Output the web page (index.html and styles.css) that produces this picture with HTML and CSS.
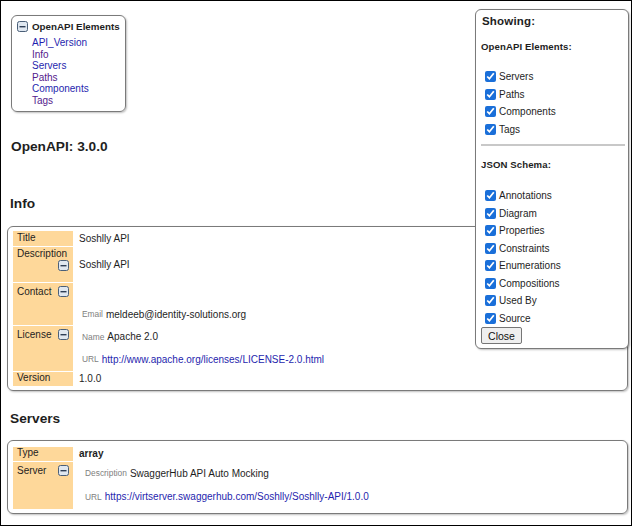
FILE: index.html
```html
<!DOCTYPE html>
<html>
<head>
<meta charset="utf-8">
<link rel="stylesheet" href="styles.css">
</head>
<body>
<div class="frame">
  <div class="nav">
    <div class="nav-head"><svg class="tog" viewBox="0 0 11 11"><rect x="0.5" y="0.5" width="10" height="10" rx="2" fill="#dfe7f0" stroke="#4a5f78"/><rect x="2.5" y="5" width="6" height="1.4" fill="#2d3e55"/></svg><span>OpenAPI Elements</span></div>
    <ul class="nav-list">
      <li><a class="lnk">API_Version</a></li>
      <li><a class="lnk visited">Info</a></li>
      <li><a class="lnk">Servers</a></li>
      <li><a class="lnk visited">Paths</a></li>
      <li><a class="lnk">Components</a></li>
      <li><a class="lnk visited">Tags</a></li>
    </ul>
  </div>

  <h2 class="version">OpenAPI: 3.0.0</h2>

  <h2 class="section info-h">Info</h2>
  <div class="box">
    <table class="props">
      <tr class="r-title"><td class="lab">Title</td><td class="val">Soshlly API</td></tr>
      <tr class="r-desc"><td class="lab">Description<svg class="tog fl" viewBox="0 0 11 11"><rect x="0.5" y="0.5" width="10" height="10" rx="2" fill="#dfe7f0" stroke="#4a5f78"/><rect x="2.5" y="5" width="6" height="1.4" fill="#2d3e55"/></svg></td><td class="val">Soshlly API</td></tr>
      <tr class="r-contact"><td class="lab">Contact<svg class="tog fl" viewBox="0 0 11 11"><rect x="0.5" y="0.5" width="10" height="10" rx="2" fill="#dfe7f0" stroke="#4a5f78"/><rect x="2.5" y="5" width="6" height="1.4" fill="#2d3e55"/></svg></td><td class="val">
        <div class="sub sub-c"><div class="srow"></div><div class="srow"><span class="sk">Email</span><span>meldeeb@identity-solutions.org</span></div></div>
      </td></tr>
      <tr class="r-license"><td class="lab">License<svg class="tog fl" viewBox="0 0 11 11"><rect x="0.5" y="0.5" width="10" height="10" rx="2" fill="#dfe7f0" stroke="#4a5f78"/><rect x="2.5" y="5" width="6" height="1.4" fill="#2d3e55"/></svg></td><td class="val">
        <div class="sub sub-l"><div class="srow"><span class="sk">Name</span><span>Apache 2.0</span></div><div class="srow"><span class="sk">URL</span><a class="url">http://www.apache.org/licenses/LICENSE-2.0.html</a></div></div>
      </td></tr>
      <tr class="r-version"><td class="lab">Version</td><td class="val">1.0.0</td></tr>
    </table>
  </div>

  <h2 class="section servers-h">Servers</h2>
  <div class="box box-servers">
    <table class="props">
      <tr class="r-type"><td class="lab">Type</td><td class="val strong">array</td></tr>
      <tr class="r-server"><td class="lab">Server<svg class="tog fl" viewBox="0 0 11 11"><rect x="0.5" y="0.5" width="10" height="10" rx="2" fill="#dfe7f0" stroke="#4a5f78"/><rect x="2.5" y="5" width="6" height="1.4" fill="#2d3e55"/></svg></td><td class="val">
        <div class="sub sub-s"><div class="srow"><span class="sk">Description</span><span>SwaggerHub API Auto Mocking</span></div><div class="srow"><span class="sk">URL</span><a class="url">https://virtserver.swaggerhub.com/Soshlly/Soshlly-API/1.0.0</a></div></div>
      </td></tr>
    </table>
  </div>

  <div class="showing">
    <div class="show-title">Showing:</div>
    <div class="show-sub">OpenAPI Elements:</div>
    <div class="checks">
      <label class="chk"><input type="checkbox" checked>Servers</label>
      <label class="chk"><input type="checkbox" checked>Paths</label>
      <label class="chk"><input type="checkbox" checked>Components</label>
      <label class="chk"><input type="checkbox" checked>Tags</label>
    </div>
    <hr class="sep">
    <div class="show-sub json">JSON Schema:</div>
    <div class="checks checks2">
      <label class="chk"><input type="checkbox" checked>Annotations</label>
      <label class="chk"><input type="checkbox" checked>Diagram</label>
      <label class="chk"><input type="checkbox" checked>Properties</label>
      <label class="chk"><input type="checkbox" checked>Constraints</label>
      <label class="chk"><input type="checkbox" checked>Enumerations</label>
      <label class="chk"><input type="checkbox" checked>Compositions</label>
      <label class="chk"><input type="checkbox" checked>Used By</label>
      <label class="chk"><input type="checkbox" checked>Source</label>
    </div>
    <button class="close">Close</button>
  </div>
</div>
</body>
</html>
```

FILE: styles.css
```css
* { box-sizing: border-box; }
html, body { margin: 0; padding: 0; background: #fff; }
body { font-family: "Liberation Sans", Arial, sans-serif; color: #1e1e1e; font-size: 10px; }
.frame {
  position: relative;
  width: 632px;
  height: 526px;
  border: 1px solid #000;
  padding: 14px 4px 0 6px;
  overflow: hidden;
}
.tog { width: 11px; height: 11px; display: block; flex: none; }
.fl { float: right; }

.nav {
  width: 115px;
  margin-left: 4px;
  border: 1px solid #7a7a7a;
  border-radius: 6px;
  box-shadow: 1px 1px 2px rgba(0,0,0,0.25);
  padding: 4px 4px 4px 5px;
}
.nav-head { display: flex; align-items: center; gap: 4px; height: 13px; font-weight: bold; font-size: 9.8px; white-space: nowrap; }
.nav-list { list-style: none; margin: 4px 0 0 15px; padding: 0; line-height: 11.6px; font-size: 10px; }
.lnk { color: #1f1fae; }
.lnk.visited { color: #54208c; }

h2 { margin: 0; font-weight: bold; font-size: 13.7px; line-height: 16px; }
.version { margin: 27px 0 0 4px; }
.info-h { margin: 41px 0 0 3px; }
.servers-h { margin: 20px 0 0 3px; }

.box {
  margin-top: 14px;
  border: 1px solid #7a7a7a;
  border-radius: 6px;
  box-shadow: 1px 1px 2px rgba(0,0,0,0.25);
  padding: 3px 4px 3px 4px;
  width: 621px;
}
.box-servers { margin-top: 13px; padding-top: 5px; }
.props { border-collapse: separate; border-spacing: 1px; font-size: 10px; }
.props td { padding: 0; }
.lab {
  width: 60px;
  background: #fed89a;
  vertical-align: top;
  padding: 1px 4px 0 4px !important;
  line-height: 12px;
}
.val { vertical-align: middle; padding-left: 5px !important; }
.strong { font-weight: bold; }
.r-title { height: 15px; }
.r-title .lab { line-height: 14px; padding-top: 0 !important; }
.r-desc { height: 35px; }
.r-contact { height: 42px; }
.r-contact .lab { padding-top: 3px !important; }
.r-license { height: 44px; }
.r-license .lab { padding-top: 3px !important; }
.r-version { height: 14px; }
.r-version .lab { padding-top: 0 !important; }
.r-type { height: 14px; }
.r-type .lab { padding-top: 0 !important; }
.r-server { height: 46px; }
.r-server .lab { padding-top: 3px !important; }

.sub { display: flex; flex-direction: column; }
.srow { display: flex; align-items: center; white-space: nowrap; }
.sub-c .srow { height: 21px; }
.sub-l .srow { height: 22.5px; }
.sub-s .srow { height: 23.5px; }
.sk { color: #808080; font-size: 8.4px; padding: 0 3px 0 3px; }
.sub-s .sk { padding-left: 6px; }
.url { color: #1f1fae; }

.showing {
  position: absolute;
  left: 474px;
  top: 8px;
  width: 154px;
  height: 340px;
  background: #fff;
  border: 1px solid #7a7a7a;
  border-radius: 6px;
  box-shadow: 1px 1px 2px rgba(0,0,0,0.25);
  padding: 4px 4px 0 5px;
}
.show-title { font-weight: bold; font-size: 11.5px; line-height: 14px; padding-left: 1px; letter-spacing: 0.2px; }
.show-sub { font-weight: bold; font-size: 9.6px; line-height: 12px; margin-top: 13px; letter-spacing: 0.1px; }
.checks { margin-top: 15px; }
.chk { display: flex; align-items: center; height: 17.5px; font-size: 10px; }
.chk input {
  width: 11px; height: 11px; margin: 0 3px 0 4px;
  accent-color: #1a6fd9;
}
.sep { border: 0; border-top: 2px solid #c8c8c8; margin: 6px 0 0 0; width: 144px; }
.json { margin-top: 13px; }
.checks2 { margin-top: 16px; }
.close {
  margin-top: 0;
  width: 41px;
  height: 17px;
  font-family: "Liberation Sans", Arial, sans-serif;
  font-size: 10.5px;
  padding: 0;
  background: #efefef;
  border: 1px solid #767676;
  border-radius: 2px;
  color: #111;
}
```
